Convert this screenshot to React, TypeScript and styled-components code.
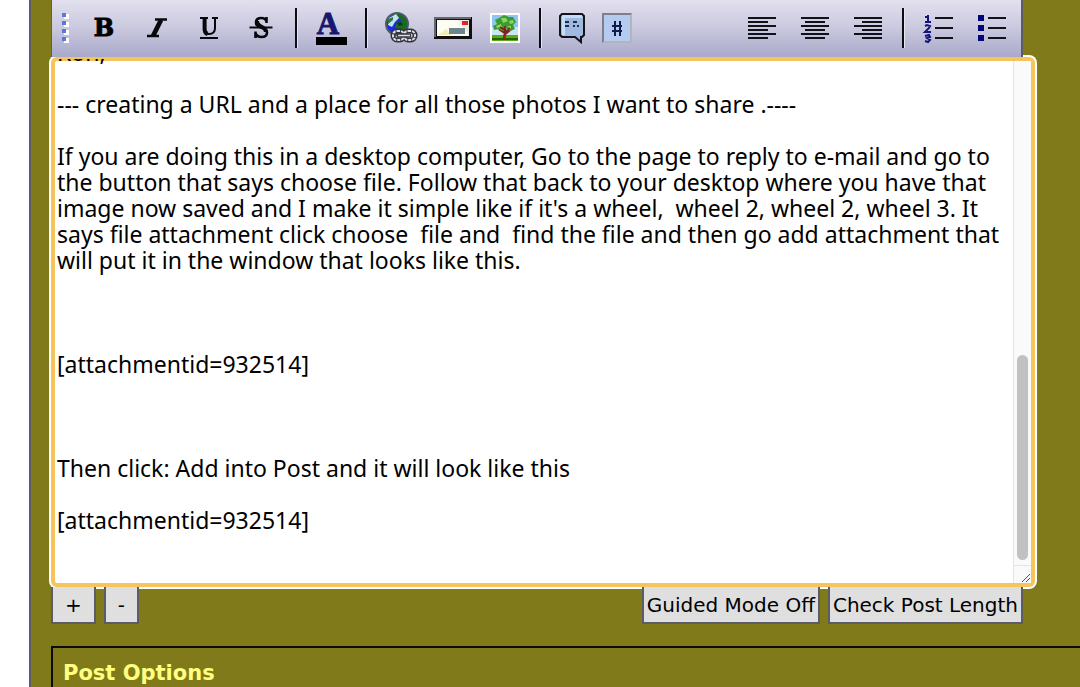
import React, { useLayoutEffect, useRef, useState } from "react";
import styled, { createGlobalStyle } from "styled-components";

const olive = "#807a1a";
const edge = "#5c5c68";
const sans = 'Verdana, "DejaVu Sans", sans-serif';
const body = 'Verdana, "Noto Sans", sans-serif';

const GlobalStyle = createGlobalStyle`
  * { box-sizing: border-box; }
  body { margin: 0; background: #fff; font-family: ${sans}; color: #000; }
`;

const Page = styled.main`
  min-height: 100vh;
  margin-left: 29px;
  padding-left: 20px;
  border-left: 2px solid ${edge};
  background: ${olive};
  display: flex;
  flex-direction: column;
  overflow: hidden;
`;

const Editor = styled.section`
  margin-right: 57px;
  display: flex;
  flex-direction: column;
`;

const Toolbar = styled.div`
  position: relative;
  z-index: 1;
  height: 57px;
  padding: 0 3px 2px 0;
  display: flex;
  align-items: center;
  justify-content: space-between;
  border: solid ${edge};
  border-width: 0 2px 0 1px;
  background: linear-gradient(#e2e0ee, #c9c8de 50%, #a9a9ca);
`;

const Group = styled.div`
  display: flex;
  align-items: center;
`;

const Tool = styled.button<{ $width?: number }>`
  width: ${(p) => p.$width ?? 52}px;
  height: 40px;
  padding: 0;
  border: 0;
  background: none;
  display: flex;
  align-items: center;
  justify-content: center;
  svg { display: block; overflow: visible; }
`;

const Handle = styled.span`
  width: 27px;
  display: flex;
  justify-content: center;
`;

const Separator = styled.span`
  width: 18px;
  height: 40px;
  display: flex;
  justify-content: center;
  &::before {
    content: "";
    width: 2px;
    background: #0c0c14;
    box-shadow: 1px 0 0 #e6e5f2;
  }
`;

const Field = styled.div`
  height: 530px;
  margin-right: -12px;
  padding: 2px;
  display: flex;
  border-radius: 6px;
  background: #fff;
  box-shadow: inset 0 0 0 4px #f5c45c, 0 0 0 2px #fff;
`;

const Message = styled.textarea`
  flex: 1;
  min-width: 0;
  padding: 0 4px;
  border: 0;
  outline: 0;
  resize: none;
  overflow: hidden;
  background: transparent;
  color: #000;
  font: 23px/26px ${body};
`;

const Scrollbar = styled.div`
  width: 18px;
  margin: 2px 2px 2px 0;
  display: flex;
  flex-direction: column;
  border-left: 1px solid #e4e4e4;
  background: #fafafa;
`;

const Track = styled.div`
  flex: 1;
  padding-bottom: 5px;
  display: flex;
  flex-direction: column;
  align-items: center;
  justify-content: flex-end;
`;

const Thumb = styled.div`
  width: 11px;
  height: 41%;
  border-radius: 6px;
  background: #c1c1c1;
`;

const Corner = styled.div`
  height: 18px;
  display: flex;
  align-items: flex-end;
  justify-content: flex-end;
  border-top: 1px solid #e4e4e4;
`;

const Actions = styled.div`
  position: relative;
  z-index: 1;
  display: flex;
  justify-content: space-between;
`;

const ActionGroup = styled.div`
  display: flex;
  gap: 8px;
`;

const ActionButton = styled.button<{ $pad?: number }>`
  height: 37px;
  padding: 0 ${(p) => p.$pad ?? 3}px;
  border: solid ${edge};
  border-width: 0 2px 2px;
  background: #dfdfdf;
  color: #000;
  font: 20px/24px ${sans};
  white-space: nowrap;
`;

const Options = styled.section`
  flex: 1;
  margin-top: 22px;
  padding: 12px 10px 0;
  border: solid #0a0a00;
  border-width: 2px 0 0 2px;
`;

const OptionsTitle = styled.h2`
  margin: 0;
  color: #ffff80;
  font: bold 21px/26px ${sans};
`;

const slab = { fontFamily: '"DejaVu Serif", serif', fontWeight: 700, textAnchor: "middle" as const };

const HandleIcon = () => (
  <svg width="7" height="30" viewBox="0 0 7 30" aria-hidden="true">
    {[0, 8, 16, 24].map((y) => (
      <g key={y}>
        <rect x="2" y={y + 1} width="5" height="5" fill="#fff" />
        <rect x="0" y={y} width="4" height="4" fill="#5b78dc" />
      </g>
    ))}
  </svg>
);

const BoldIcon = () => (
  <svg width="28" height="32"><text x="13" y="24" fontSize="24" {...slab} stroke="#000">B</text></svg>
);
const ItalicIcon = () => (
  <svg width="28" height="32" fill="none" stroke="#08080c">
    <path d="M12 7.5h12M4 24h12" strokeWidth="2.4" />
    <path d="M18 8 10 24" strokeWidth="4.8" />
  </svg>
);
const UnderlineIcon = () => (
  <svg width="28" height="32" fill="none" stroke="#08080c">
    <path d="M5 6h8M17 6h6" strokeWidth="2" />
    <path d="M9 6v11q0 5 5 5 6 0 6-6V6" strokeWidth="2" />
    <path d="M9.6 6v11q0 4 3 5" strokeWidth="4" />
    <path d="M5 26h18" strokeWidth="2" />
  </svg>
);
const StrikeIcon = () => (
  <svg width="28" height="32" fill="none" stroke="#08080c">
    <path d="M19.5 5v6M19.5 9Q18 6 14.5 6 9 6 9 10.5 9 14 14 15.5 20 17 20 20.5 20 25 14.5 25 10 25 8.5 21M8.5 19.5v6.5" strokeWidth="2.6" />
    <path d="M10 9q0 4 5 6 4 2 4 5" strokeWidth="4" />
    <path d="M2.5 15.5h23" strokeWidth="2" />
  </svg>
);
const ColourIcon = () => (
  <svg width="32" height="32">
    <text x="13" y="22" fontSize="31" {...slab} fontFamily='"Liberation Serif", serif' fill="#17176e" stroke="#17176e" strokeWidth="1">A</text>
    <rect x="1" y="25" width="31" height="8" fill="#000" />
  </svg>
);
const LinkIcon = () => (
  <svg width="32" height="32">
    <circle cx="12" cy="12" r="11" fill="#1a2be0" stroke="#555a66" strokeWidth="2" />
    <path d="M10 2q7-1 11 5 3 6-1 11l-5 1-5-4 2-5 5-1-4-3-4 2z" fill="#176b25" />
    <path d="M4 6l7-4 3 4-4 4-3 5-4-2z" fill="#c8e0ee" />
    <path d="M3 7l5-2 0 3-5 4z" fill="#28803a" />
    <path d="M12 11l4-1 2 3-4 1z" fill="#0b3c18" />
    <g fill="none" stroke="#33343c" strokeWidth="5">
      <rect x="8" y="19" width="11" height="9" rx="4" />
      <rect x="19" y="19" width="11" height="9" rx="4" />
    </g>
    <g fill="none" stroke="#dcdce4" strokeWidth="2" strokeDasharray="3 1">
      <rect x="8" y="19" width="11" height="9" rx="4" />
      <rect x="19" y="19" width="11" height="9" rx="4" />
    </g>
    <path d="M12 23.500h14" stroke="#33343c" strokeWidth="4" />
    <path d="M13 23.500h12" stroke="#dcdce4" strokeWidth="1.500" />
  </svg>
);
const MailIcon = () => (
  <svg width="38" height="22">
    <rect width="38" height="22" fill="#101014" />
    <path d="M0 0h37v2H2v18H0z" fill="#66666c" />
    <rect x="3" y="3" width="32" height="16" fill="#fdfdf4" />
    <path d="M4 18l8-6 6 6z" fill="#f0efb0" />
    <path d="M24 3h11v16z" fill="#e9ecd8" />
    <rect x="15" y="11" width="16" height="6" fill="#6c8790" />
    <rect x="28" y="4" width="6" height="4" fill="#dd2231" />
  </svg>
);
const ImageIcon = () => (
  <svg width="30" height="30">
    <rect width="30" height="30" fill="#fff" />
    <rect x="2" y="2" width="26" height="26" fill="#8fc6ef" />
    <path d="M2 14h26v9H2z" fill="#c9e6f6" />
    <path d="M2 22h26v6H2z" fill="#5cab14" />
    <path d="M2 26h26" stroke="#1f6408" strokeWidth="2" />
    <path d="M14 26l1-6-6-4M15 21l6-5M15 20V12" fill="none" stroke="#8d2118" strokeWidth="2.500" />
    <path d="M9 5l5-3 5 2 4 0 3 5-3 3 2 4-5 2-4-3-4 3-3-2-5 1-1-4 4-2-2-4z" fill="#3a9c30" />
    <path d="M11 5l5 0 2 3-5 2zM19 8l4-1 1 3-4 1zM6 13l5-2 1 3-5 1zM17 13l4 0 0 3z" fill="#8fd45c" />
    <path d="M15 20v-7M15 17l-5-3M16 18l4-3" fill="none" stroke="#7d2118" strokeWidth="1.500" />
  </svg>
);
const QuoteIcon = () => (
  <svg width="26" height="32">
    <path d="M3 2h20l2 2v19l-2 2h-1v5l-6-5H3l-2-2V4z" fill="#9fb9df" stroke="#14151c" strokeWidth="2" />
    <path d="M3 3h20v3H6v17H3z" fill="#c4dcf6" />
    <path d="M6 10h4M6 14h4M14 10h4M14 14h2M18 14h2" stroke="#1c2c55" strokeWidth="2" />
  </svg>
);
const CodeIcon = () => (
  <svg width="30" height="30">
    <rect width="30" height="30" fill="#b3b3bb" />
    <path d="M0 30V0h30l-2 2H2v26z" fill="#7f7f8b" />
    <rect x="2" y="2" width="26" height="26" fill="#b4caef" />
    <path d="M13 8v15M18 8v15M10 13h10M10 18h10" stroke="#0f1c4c" strokeWidth="2" />
  </svg>
);

const lineEnds: Record<string, [number, number]> = { left: [0, 20], center: [4, 24], right: [8, 28] };

const AlignIcon = ({ side }: { side: "left" | "center" | "right" }) => {
  const [from, to] = lineEnds[side];
  return (
    <svg width="28" height="24" stroke="#111118" strokeWidth="2">
      {[2, 10, 18].map((y) => (
        <path key={y} d={`M0 ${y}h28M${from} ${y + 4}H${to}`} />
      ))}
    </svg>
  );
};

const NumberedIcon = () => (
  <svg width="29" height="30" fill="none" strokeWidth="2">
    <path d="M11 5h18M11 15h18M11 25h18" stroke="#111118" />
    <path d="M1 4h3V2M4 2v7M1 9h6M1 13l2-1 3 1-1 2-4 4h6M1 23l4-1 1 2-3 1 3 2-2 2-3-1" stroke="#15157e" />
  </svg>
);
const BulletIcon = () => (
  <svg width="28" height="26">
    <path d="M0 0h6v6H0zM0 10h6v6H0zM0 20h6v6H0z" fill="#05057a" />
    <path d="M10 3h18M10 13h18M10 23h18" stroke="#111118" strokeWidth="2" />
  </svg>
);

const GripIcon = () => (
  <svg width="10" height="10" aria-hidden="true" stroke="#555" strokeWidth="1">
    <path d="M1 9l8-8M5 9l4-4" />
  </svg>
);

const draft = [
  "Ron,",
  "",
  "--- creating a URL and a place for all those photos I want to share .----",
  "",
  "If you are doing this in a desktop computer, Go to the page to reply to e-mail and go to",
  "the button that says choose file. Follow that back to your desktop where you have that",
  "image now saved and I make it simple like if it's a wheel,  wheel 2, wheel 2, wheel 3. It",
  "says file attachment click choose  file and  find the file and then go add attachment that",
  "will put it in the window that looks like this.",
  "",
  "",
  "",
  "[attachmentid=932514]",
  "",
  "",
  "",
  "Then click: Add into Post and it will look like this",
  "",
  "[attachmentid=932514]",
  "",
  "",
].join("\n");

export default function App() {
  const [text, setText] = useState(draft);
  const message = useRef<HTMLTextAreaElement>(null);

  useLayoutEffect(() => {
    const el = message.current;
    if (el) el.scrollTop = el.scrollHeight;
  }, []);

  return (
    <>
      <GlobalStyle />
      <Page>
        <Editor>
          <Toolbar role="toolbar" aria-label="Formatting">
            <Group>
              <Handle><HandleIcon /></Handle>
              <Tool aria-label="Bold"><BoldIcon /></Tool>
              <Tool aria-label="Italic"><ItalicIcon /></Tool>
              <Tool aria-label="Underline"><UnderlineIcon /></Tool>
              <Tool aria-label="Strikethrough"><StrikeIcon /></Tool>
              <Separator />
              <Tool aria-label="Text colour"><ColourIcon /></Tool>
              <Separator />
              <Tool aria-label="Insert link"><LinkIcon /></Tool>
              <Tool aria-label="Insert e-mail"><MailIcon /></Tool>
              <Tool aria-label="Insert image"><ImageIcon /></Tool>
              <Separator />
              <Tool $width={45} aria-label="Quote"><QuoteIcon /></Tool>
              <Tool $width={45} aria-label="Code"><CodeIcon /></Tool>
            </Group>
            <Group>
              <Tool $width={53} aria-label="Align left"><AlignIcon side="left" /></Tool>
              <Tool $width={53} aria-label="Align centre"><AlignIcon side="center" /></Tool>
              <Tool $width={53} aria-label="Align right"><AlignIcon side="right" /></Tool>
              <Separator />
              <Tool $width={53} aria-label="Numbered list"><NumberedIcon /></Tool>
              <Tool $width={53} aria-label="Bulleted list"><BulletIcon /></Tool>
            </Group>
          </Toolbar>
          <Field>
            <Message
              ref={message}
              aria-label="Message"
              wrap="off"
              spellCheck={false}
              value={text}
              onChange={(e) => setText(e.target.value)}
            />
            <Scrollbar aria-hidden="true">
              <Track><Thumb /></Track>
              <Corner><GripIcon /></Corner>
            </Scrollbar>
          </Field>
          <Actions>
            <ActionGroup>
              <ActionButton $pad={12}>+</ActionButton>
              <ActionButton $pad={12}>-</ActionButton>
            </ActionGroup>
            <ActionGroup>
              <ActionButton>Guided Mode Off</ActionButton>
              <ActionButton>Check Post Length</ActionButton>
            </ActionGroup>
          </Actions>
        </Editor>
        <Options>
          <OptionsTitle>Post Options</OptionsTitle>
        </Options>
      </Page>
    </>
  );
}
